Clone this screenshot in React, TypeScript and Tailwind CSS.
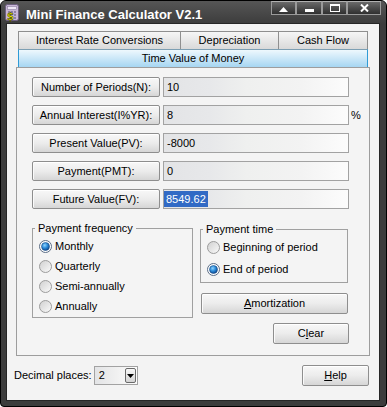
import React from "react";

function Btn({ children, className = "" }: { children: React.ReactNode; className?: string }) {
  return (
    <div
      className={`flex items-center justify-center border border-[#8e8e8e] rounded-[2px] bg-linear-to-b from-[#f8f8f8] via-[#ececec] to-[#d6d6d6] shadow-[inset_0_1px_0_#ffffff,inset_1px_0_0_#fafafa] text-[11px] leading-[13px] text-black ${className}`}
    >
      {children}
    </div>
  );
}

function Field({ children }: { children?: React.ReactNode }) {
  return (
    <div className="w-[186px] h-[20px] border border-[#a2a2a2] bg-[linear-gradient(to_right,#e3e4e6,#e7e8ea_25%,#eff0ef_45%,#f3f3f3_75%,#fcfcfc)] flex items-center pl-[3px] text-[11px] leading-[13px] text-black">
      {children}
    </div>
  );
}

function Radio({ checked }: { checked?: boolean }) {
  return (
    <svg width="13" height="13" viewBox="0 0 13 13" className="shrink-0">
      <defs>
        <linearGradient id="rg" x1="0" y1="0" x2="1" y2="1">
          <stop offset="0" stopColor="#cfcfcf" />
          <stop offset="1" stopColor="#fbfbfb" />
        </linearGradient>
        <radialGradient id="rb" cx="0.4" cy="0.35" r="0.7">
          <stop offset="0" stopColor="#8fd3ff" />
          <stop offset="0.5" stopColor="#2a8ad8" />
          <stop offset="1" stopColor="#0a3f86" />
        </radialGradient>
      </defs>
      {checked ? (
        <>
          <circle cx="6.5" cy="6.5" r="6" fill="#ffffff" stroke="#5a6c84" />
          <circle cx="6.5" cy="6.5" r="4" fill="url(#rb)" stroke="#1e4f88" strokeWidth="0.6" />
        </>
      ) : (
        <circle cx="6.5" cy="6.5" r="6" fill="url(#rg)" stroke="#9c9c9c" />
      )}
    </svg>
  );
}

function RadioRow({ label, checked, className = "" }: { label: string; checked?: boolean; className?: string }) {
  return (
    <div className={`flex items-center gap-[3px] h-[20px] text-[11px] leading-[13px] text-black ${className}`}>
      <Radio checked={checked} />
      <span>{label}</span>
    </div>
  );
}

function TitleBtn({ w, children }: { w: string; children: React.ReactNode }) {
  return (
    <div
      className={`${w} h-[14px] border border-[#9a9a9a] border-t-[#b0b0b0] bg-linear-to-b from-[#6a6a6a] to-[#303030] flex items-center justify-center`}
    >
      {children}
    </div>
  );
}

export default function App() {
  return (
    <div className="w-[387px] h-[407px] bg-white">
      <div className="w-[387px] h-[407px] border border-black rounded-t-[6px] rounded-b-[4px] bg-[#3c3c3c] flex flex-col font-['Liberation_Sans',Arial,sans-serif] overflow-hidden">
        {/* Title bar */}
        <div className="h-[23px] shrink-0 flex items-start bg-linear-to-b from-[#565656] to-[#3c3c3c]">
          <div className="ml-[3px] mt-[3px]">
            <svg width="17" height="18" viewBox="0 0 17 18">
              <rect x="1.5" y="0.5" width="13" height="16" rx="2" fill="#c7b6d6" stroke="#6e5f80" />
              <rect x="3.5" y="2.5" width="9" height="3" fill="#efe8f6" stroke="#8d7ea0" strokeWidth="0.6" />
              <rect x="4" y="7" width="2" height="2" fill="#8f80a2" />
              <rect x="7" y="7" width="2" height="2" fill="#8f80a2" />
              <rect x="10" y="7" width="2" height="2" fill="#8f80a2" />
              <rect x="10" y="10" width="2" height="2" fill="#8f80a2" />
              <rect x="10" y="13" width="2" height="2" fill="#8f80a2" />
              <text x="3" y="16" fontSize="10" fontWeight="bold" fontFamily="DejaVu Sans, sans-serif" fill="#e6e400" stroke="#3a3a00" strokeWidth="0.5">$</text>
            </svg>
          </div>
          <div className="ml-[5px] mt-[6px] text-[13px] leading-[15px] font-bold text-white">Mini Finance Calculator V2.1</div>
          <div className="ml-auto mr-[5px] flex">
            <TitleBtn w="w-[25px]">
              <svg width="9" height="5" viewBox="0 0 9 5" className="mt-[3px]">
                <polygon points="0,5 9,5 4.5,0" fill="#ffffff" />
              </svg>
            </TitleBtn>
            <TitleBtn w="w-[26px]">
              <div className="w-[9px] h-[3px] bg-white mt-[5px]" />
            </TitleBtn>
            <TitleBtn w="w-[25px]">
              <div className="w-[10px] h-[8px] border border-white border-t-[2px]" />
            </TitleBtn>
            <TitleBtn w="w-[34px]">
              <svg width="9" height="8" viewBox="0 0 9 8">
                <path d="M1 0.5 L8 7.5 M8 0.5 L1 7.5" stroke="#ffffff" strokeWidth="2" />
              </svg>
            </TitleBtn>
          </div>
        </div>

        {/* Client */}
        <div className="ml-[6px] w-[372px] h-[376px] bg-[#f3f3f3] flex flex-col shadow-[0_0_0_1px_#262626]">
          {/* Tabs */}
          <div className="ml-[11px] mt-[7px] w-[350px] flex flex-col text-[11px] leading-[13px] text-black">
            <div className="flex h-[18px]">
              <div className="w-[162px] border-t border-l border-[#8f8f8f] bg-linear-to-b from-[#f6f6f6] to-[#d9d9d9] flex items-center justify-center">
                Interest Rate Conversions
              </div>
              <div className="w-[98px] border-t border-l border-[#8f8f8f] bg-linear-to-b from-[#f6f6f6] to-[#d9d9d9] flex items-center justify-center">
                Depreciation
              </div>
              <div className="w-[90px] border-t border-l border-r border-[#8f8f8f] bg-linear-to-b from-[#f6f6f6] to-[#d9d9d9] flex items-center justify-center">
                Cash Flow
              </div>
            </div>
            <div className="h-[18px] border-t border-t-[#7d9fb3] border-l border-r border-l-[#2f9bd6] border-r-[#2f9bd6] bg-linear-to-b from-[#eef8fd] to-[#a6d6f2] flex items-center justify-center">
              Time Value of Money
            </div>
          </div>

          {/* Panel */}
          <div className="ml-[9px] w-[354px] h-[289px] shrink-0 border border-[#9d9d9d] bg-[#f4f4f4] pl-[15px] pt-[9px] flex flex-col">
            <div className="flex flex-col gap-[8px]">
              <div className="flex items-center gap-[3px]">
                <Btn className="w-[128px] h-[20px]">Number of Periods(N):</Btn>
                <Field>10</Field>
              </div>
              <div className="flex items-center gap-[3px]">
                <Btn className="w-[128px] h-[20px]">Annual Interest(I%YR):</Btn>
                <Field>8</Field>
                <span className="ml-[-1px] text-[11px] leading-[13px] text-black">%</span>
              </div>
              <div className="flex items-center gap-[3px]">
                <Btn className="w-[128px] h-[20px]">Present Value(PV):</Btn>
                <Field>-8000</Field>
              </div>
              <div className="flex items-center gap-[3px]">
                <Btn className="w-[128px] h-[20px]">Payment(PMT):</Btn>
                <Field>0</Field>
              </div>
              <div className="flex items-center gap-[3px]">
                <Btn className="w-[128px] h-[20px]">Future Value(FV):</Btn>
                <div className="w-[186px] h-[20px] border border-[#a2a2a2] bg-[linear-gradient(to_right,#e3e4e6,#e7e8ea_25%,#eff0ef_45%,#f3f3f3_75%,#fcfcfc)] flex items-center text-[11px] leading-[13px]">
                  <span className="bg-[#316ac5] text-white px-[2px] leading-[16px]">8549.62</span>
                </div>
              </div>
            </div>

            <div className="flex gap-[7px] mt-[12px]">
              <fieldset className="w-[161px] h-[97px] border border-[#a0a0a0] p-0 m-0">
                <legend className="ml-[2px] px-[3px] text-[11px] leading-[14px] h-[14px] text-black">Payment frequency</legend>
                <div className="pl-[6px] pt-[1px]">
                  <RadioRow label="Monthly" checked />
                  <RadioRow label="Quarterly" />
                  <RadioRow label="Semi-annually" />
                  <RadioRow label="Annually" />
                </div>
              </fieldset>

              <div className="w-[149px] mt-[1px] flex flex-col">
                <fieldset className="w-[148px] h-[61px] border border-[#a0a0a0] p-0 m-0">
                  <legend className="ml-[2px] px-[3px] text-[11px] leading-[14px] h-[14px] text-black">Payment time</legend>
                  <div className="pl-[6px] pt-[1px]">
                    <RadioRow label="Beginning of period" />
                    <RadioRow label="End of period" checked className="mt-[2px]" />
                  </div>
                </fieldset>
                <Btn className="ml-[1px] mt-[10px] w-[147px] h-[21px]">
                  <span>
                    <span className="underline">A</span>mortization
                  </span>
                </Btn>
                <Btn className="self-end mt-[9px] w-[76px] h-[21px]">
                  <span>
                    C<span className="underline">l</span>ear
                  </span>
                </Btn>
              </div>
            </div>
          </div>

          {/* Bottom row */}
          <div className="mt-[9px] h-[21px] flex items-center pl-[7px] pr-[10px] text-[11px] leading-[13px] text-black">
            <span>Decimal places:</span>
            <div className="ml-[2px] w-[44px] h-[19px] border border-[#a2a2a2] bg-[linear-gradient(to_right,#e3e4e6,#f0f0f0_50%,#fdfdfd)] flex items-center pl-[4px] pr-[1px]">
              <span>2</span>
              <div className="ml-auto w-[11px] h-[15px] border border-[#6a6a6a] rounded-[2px] bg-linear-to-b from-[#f8f8f8] to-[#d4d4d4] flex items-center justify-center">
                <svg width="7" height="4" viewBox="0 0 7 4">
                  <polygon points="0,0 7,0 3.5,4" fill="#000" />
                </svg>
              </div>
            </div>
            <Btn className="ml-auto w-[67px] h-[21px]">
              <span>
                <span className="underline">H</span>elp
              </span>
            </Btn>
          </div>
        </div>
      </div>
    </div>
  );
}
